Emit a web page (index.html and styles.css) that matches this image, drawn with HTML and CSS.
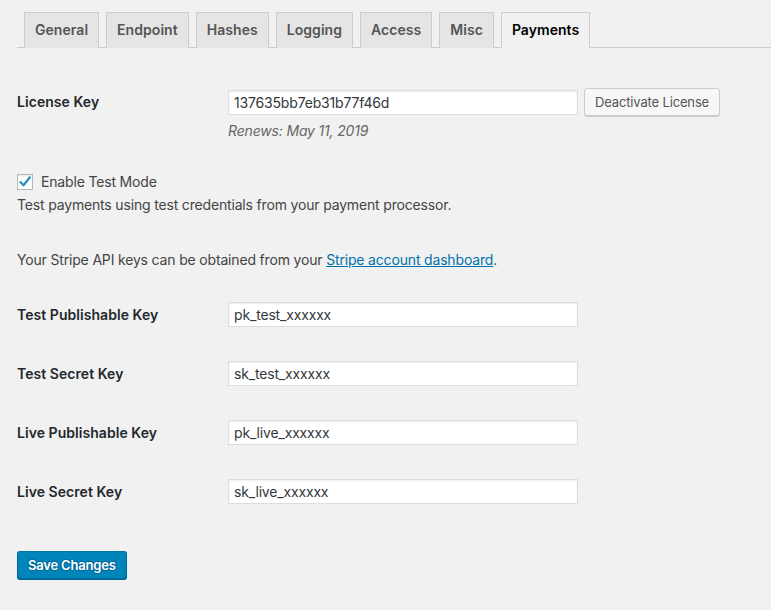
FILE: index.html
```html
<!DOCTYPE html>
<html>
<head>
<meta charset="utf-8">
<link rel="stylesheet" href="styles.css">
</head>
<body>
<div class="wrap">
  <nav class="tabs">
    <a class="tab">General</a>
    <a class="tab">Endpoint</a>
    <a class="tab">Hashes</a>
    <a class="tab">Logging</a>
    <a class="tab">Access</a>
    <a class="tab">Misc</a>
    <a class="tab active">Payments</a>
  </nav>

  <div class="row license-row">
    <div class="label">License Key</div>
    <div class="field">
      <div class="field-line">
        <input class="text-input" type="text" value="137635bb7eb31b77f46d">
        <button class="btn">Deactivate License</button>
      </div>
      <p class="renews">Renews: May 11, 2019</p>
    </div>
  </div>

  <label class="check-line">
    <span class="checkbox">
      <svg width="16" height="16" viewBox="0 0 16 16"><path d="M3.6 8.2 L6.6 11.2 L12.6 3.6" fill="none" stroke="#1e8cbe" stroke-width="2.2" stroke-linecap="square"/></svg>
    </span>
    Enable Test Mode
  </label>
  <p class="desc">Test payments using test credentials from your payment processor.</p>

  <p class="stripe">Your Stripe API keys can be obtained from your <a class="link" href="#">Stripe account dashboard</a>.</p>

  <div class="key-rows">
    <div class="row key-row">
      <div class="label">Test Publishable Key</div>
      <input class="text-input" type="text" value="pk_test_xxxxxx">
    </div>
    <div class="row key-row">
      <div class="label">Test Secret Key</div>
      <input class="text-input" type="text" value="sk_test_xxxxxx">
    </div>
    <div class="row key-row">
      <div class="label">Live Publishable Key</div>
      <input class="text-input" type="text" value="pk_live_xxxxxx">
    </div>
    <div class="row key-row">
      <div class="label">Live Secret Key</div>
      <input class="text-input" type="text" value="sk_live_xxxxxx">
    </div>
  </div>

  <button class="btn-primary">Save Changes</button>
</div>
</body>
</html>
```

FILE: styles.css
```css
html, body {
  margin: 0;
  padding: 0;
  background: #f1f1f1;
}
body {
  font-family: Inter, "Liberation Sans", Arial, sans-serif;
  font-size: 14px;
  color: #444;
  letter-spacing: -0.17px;
  width: 771px;
  height: 610px;
  overflow: hidden;
}
.wrap {
  padding: 12px 0 0 17px;
}
.tabs {
  display: flex;
  padding-left: 7px;
  border-bottom: 1px solid #ccc;
  height: 35px;
}
.tab {
  box-sizing: border-box;
  height: 36px;
  margin-right: 7px;
  padding: 5px 10px 0;
  line-height: 24px;
  font-size: 14px;
  font-weight: 600;
  letter-spacing: 0.05px;
  color: #555;
  background: #e5e5e5;
  border: 1px solid #ccc;
  border-bottom: none;
}
.tab.active {
  color: #000;
  background: #f1f1f1;
  position: relative;
  z-index: 1;
  height: 36px;
  border-bottom: 1px solid #f1f1f1;
}
.row {
  display: flex;
  align-items: flex-start;
}
.label {
  width: 211px;
  flex: none;
  font-weight: 600;
  letter-spacing: 0.05px;
  color: #23282d;
  line-height: 20px;
}
.license-row {
  margin-top: 40px;
}
.license-row .label {
  margin-top: 4px;
}
.field-line {
  display: flex;
  align-items: center;
  gap: 6px;
}
.text-input {
  box-sizing: border-box;
  width: 350px;
  height: 25px;
  margin: 0;
  padding: 0 5px;
  font-family: Inter, "Liberation Sans", Arial, sans-serif;
  font-size: 14px;
  letter-spacing: -0.17px;
  color: #32373c;
  background: #fff;
  border: 1px solid #ddd;
  box-shadow: inset 0 1px 2px rgba(0,0,0,0.07);
  outline: none;
}
.btn {
  box-sizing: border-box;
  height: 28px;
  padding: 0 10px;
  font-family: Inter, "Liberation Sans", Arial, sans-serif;
  font-size: 13px;
  letter-spacing: -0.15px;
  color: #555;
  background: #f7f7f7;
  border: 1px solid #ccc;
  border-radius: 3px;
  box-shadow: 0 1px 0 #ccc;
}
.renews {
  margin: 5px 0 0;
  font-style: italic;
  color: #666;
  line-height: 20px;
}
.check-line {
  display: flex;
  align-items: center;
  margin-top: 31px;
  color: #444;
  line-height: 20px;
}
.checkbox {
  box-sizing: border-box;
  width: 16px;
  height: 16px;
  margin-right: 8px;
  background: #fff;
  border: 1px solid #b4b9be;
  box-shadow: inset 0 1px 2px rgba(0,0,0,0.1);
  display: flex;
  align-items: center;
  justify-content: center;
}
.checkbox svg {
  display: block;
  margin: -1px;
}
.desc {
  margin: 3px 0 0;
  line-height: 20px;
}
.stripe {
  margin: 35px 0 0;
  line-height: 20px;
}
.link {
  color: #0073aa;
  text-decoration: underline;
}
.key-rows {
  display: flex;
  flex-direction: column;
  gap: 34px;
  margin-top: 32px;
}
.key-row {
  align-items: center;
}
.btn-primary {
  box-sizing: border-box;
  height: 28px;
  margin-top: 47px;
  padding: 0 10px 1px;
  font-family: Inter, "Liberation Sans", Arial, sans-serif;
  font-size: 13px;
  font-weight: 600;
  letter-spacing: -0.2px;
  color: #fff;
  background: #0085ba;
  border: 1px solid;
  border-color: #0073aa #006799 #006799;
  border-radius: 3px;
  box-shadow: 0 1px 0 #006799;
  text-shadow: 0 -1px 1px #006799, 1px 0 1px #006799, 0 1px 1px #006799, -1px 0 1px #006799;
}
```
